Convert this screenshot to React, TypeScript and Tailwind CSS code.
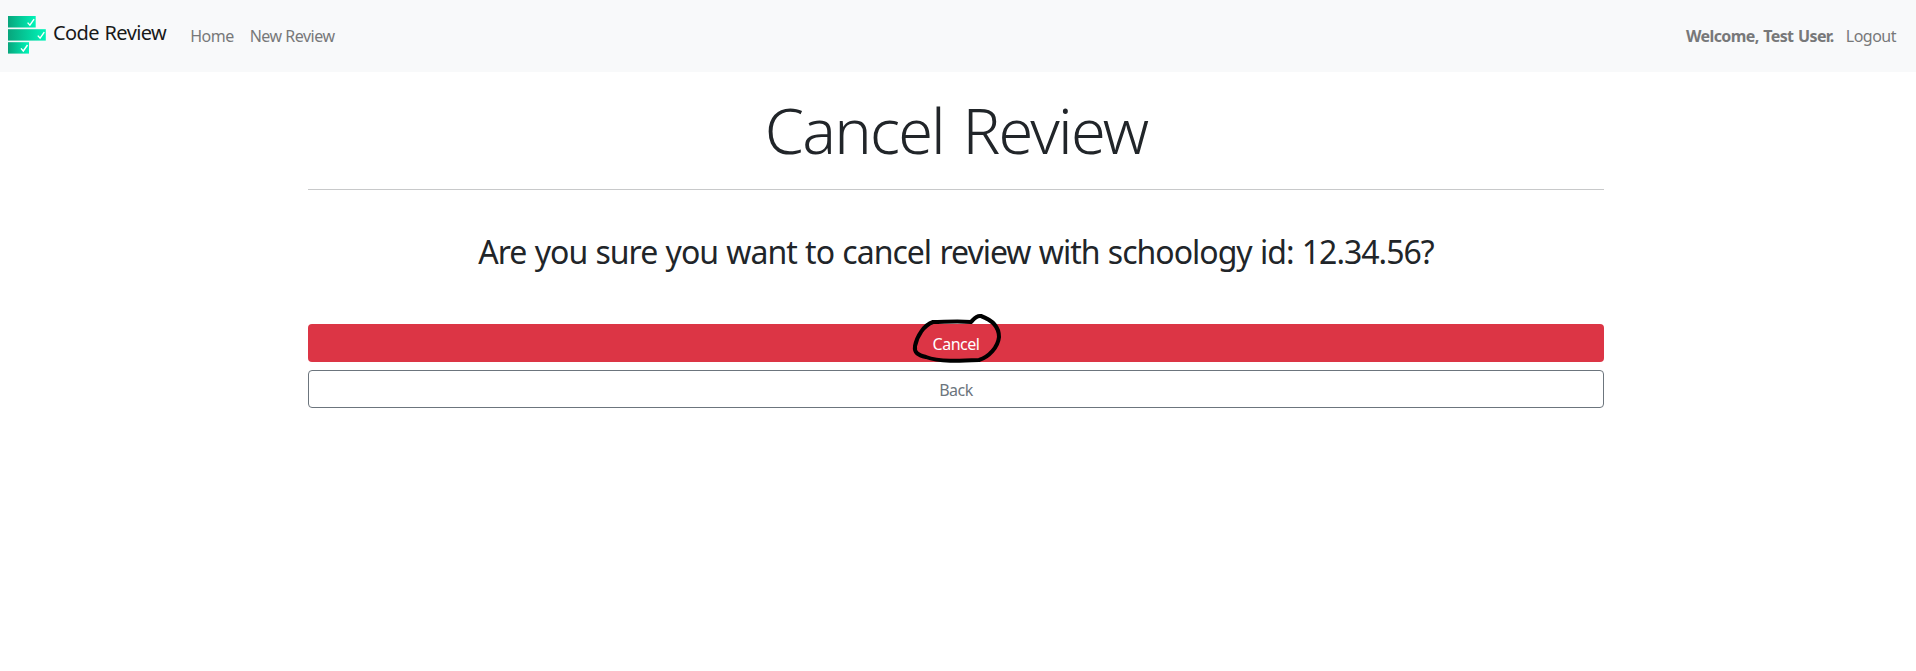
function Check({ x, y }: { x: number; y: number }) {
  return (
    <path
      d={`M${x} ${y + 4}l2.3 2.6l4.2 -6`}
      fill="none"
      stroke="#fff"
      strokeWidth="1.4"
    />
  );
}

function Logo() {
  return (
    <svg width="38" height="38" viewBox="0 0 38 38" className="shrink-0">
      <defs>
        <linearGradient id="bar" x1="0" y1="0" x2="1" y2="0">
          <stop offset="0" stopColor="#08a57c" />
          <stop offset="1" stopColor="#00f5b9" />
        </linearGradient>
      </defs>
      <rect x="0" y="0" width="27.7" height="11.5" fill="url(#bar)" />
      <rect x="0" y="13.2" width="37.8" height="11.4" fill="url(#bar)" />
      <rect x="0" y="26.2" width="21" height="11.4" fill="url(#bar)" />
      <Check x={19.6} y={2.6} />
      <Check x={29.8} y={15.6} />
      <Check x={13} y={28.4} />
    </svg>
  );
}

export default function App() {
  return (
    <div className="min-h-[671px] bg-white font-['Noto_Sans','Open_Sans',sans-serif] text-base text-[#212529]">
      <nav className="flex h-[72px] items-center bg-[#f8f9fa] pr-5 pl-2">
        <a className="flex items-center gap-[7px] pb-0.5">
          <Logo />
          <span className="pb-1 text-xl leading-[30px] tracking-[-0.6px] text-[#181919] [word-spacing:1px]">Code Review</span>
        </a>
        <div className="ml-6 flex gap-4 leading-6 text-[#777879]">
          <a className="tracking-[-0.5px]">Home</a>
          <a className="tracking-[-0.5px]">New Review</a>
        </div>
        <div className="ml-auto flex gap-3 leading-6 text-[#777879]">
          <strong className="font-bold tracking-[-0.6px] [word-spacing:1px]">Welcome, Test User.</strong>
          <a className="tracking-[-0.5px]">Logout</a>
        </div>
      </nav>
      <main className="ml-[308px] w-[1296px] text-center">
        <h1 className="pt-[19px] pb-px text-[63px] leading-[77px] font-light tracking-[-1.8px] [word-spacing:4px]">
          Cancel Review
        </h1>
        <hr className="mt-5 border-t border-[#c8c9ca]" />
        <p className="mt-[43px] text-[32px] leading-[38px] tracking-[-1px] [word-spacing:1px]">
          Are you sure you want to cancel review with schoology id: 12.34.56?
        </p>
        <div className="mt-[53px] flex flex-col gap-2">
          <div className="relative">
            <button className="block h-[38px] w-full rounded bg-[#dc3545] pt-px leading-[38px] tracking-[-0.5px] text-white">
              Cancel
            </button>
            <svg className="absolute top-[-12px] left-[602px]" width="94" height="54" viewBox="0 0 94 54">
              <path
                d="M61 10 C48 9 34 10 23 10 C14 13 7 24 5 34 C4 41 8 43 16 45 C29 50 50 49 69 48 C79 45 88 35 89 25 C89 14 82 8 71 4 C66 3 64 7 61 10Z"
                fill="none"
                stroke="#000"
                strokeWidth="4"
                strokeLinejoin="round"
              />
            </svg>
          </div>
          <button className="h-[38px] rounded border border-[#6c757d] pt-px leading-9 tracking-[-0.5px] text-[#6c757d]">
            Back
          </button>
        </div>
      </main>
    </div>
  );
}
